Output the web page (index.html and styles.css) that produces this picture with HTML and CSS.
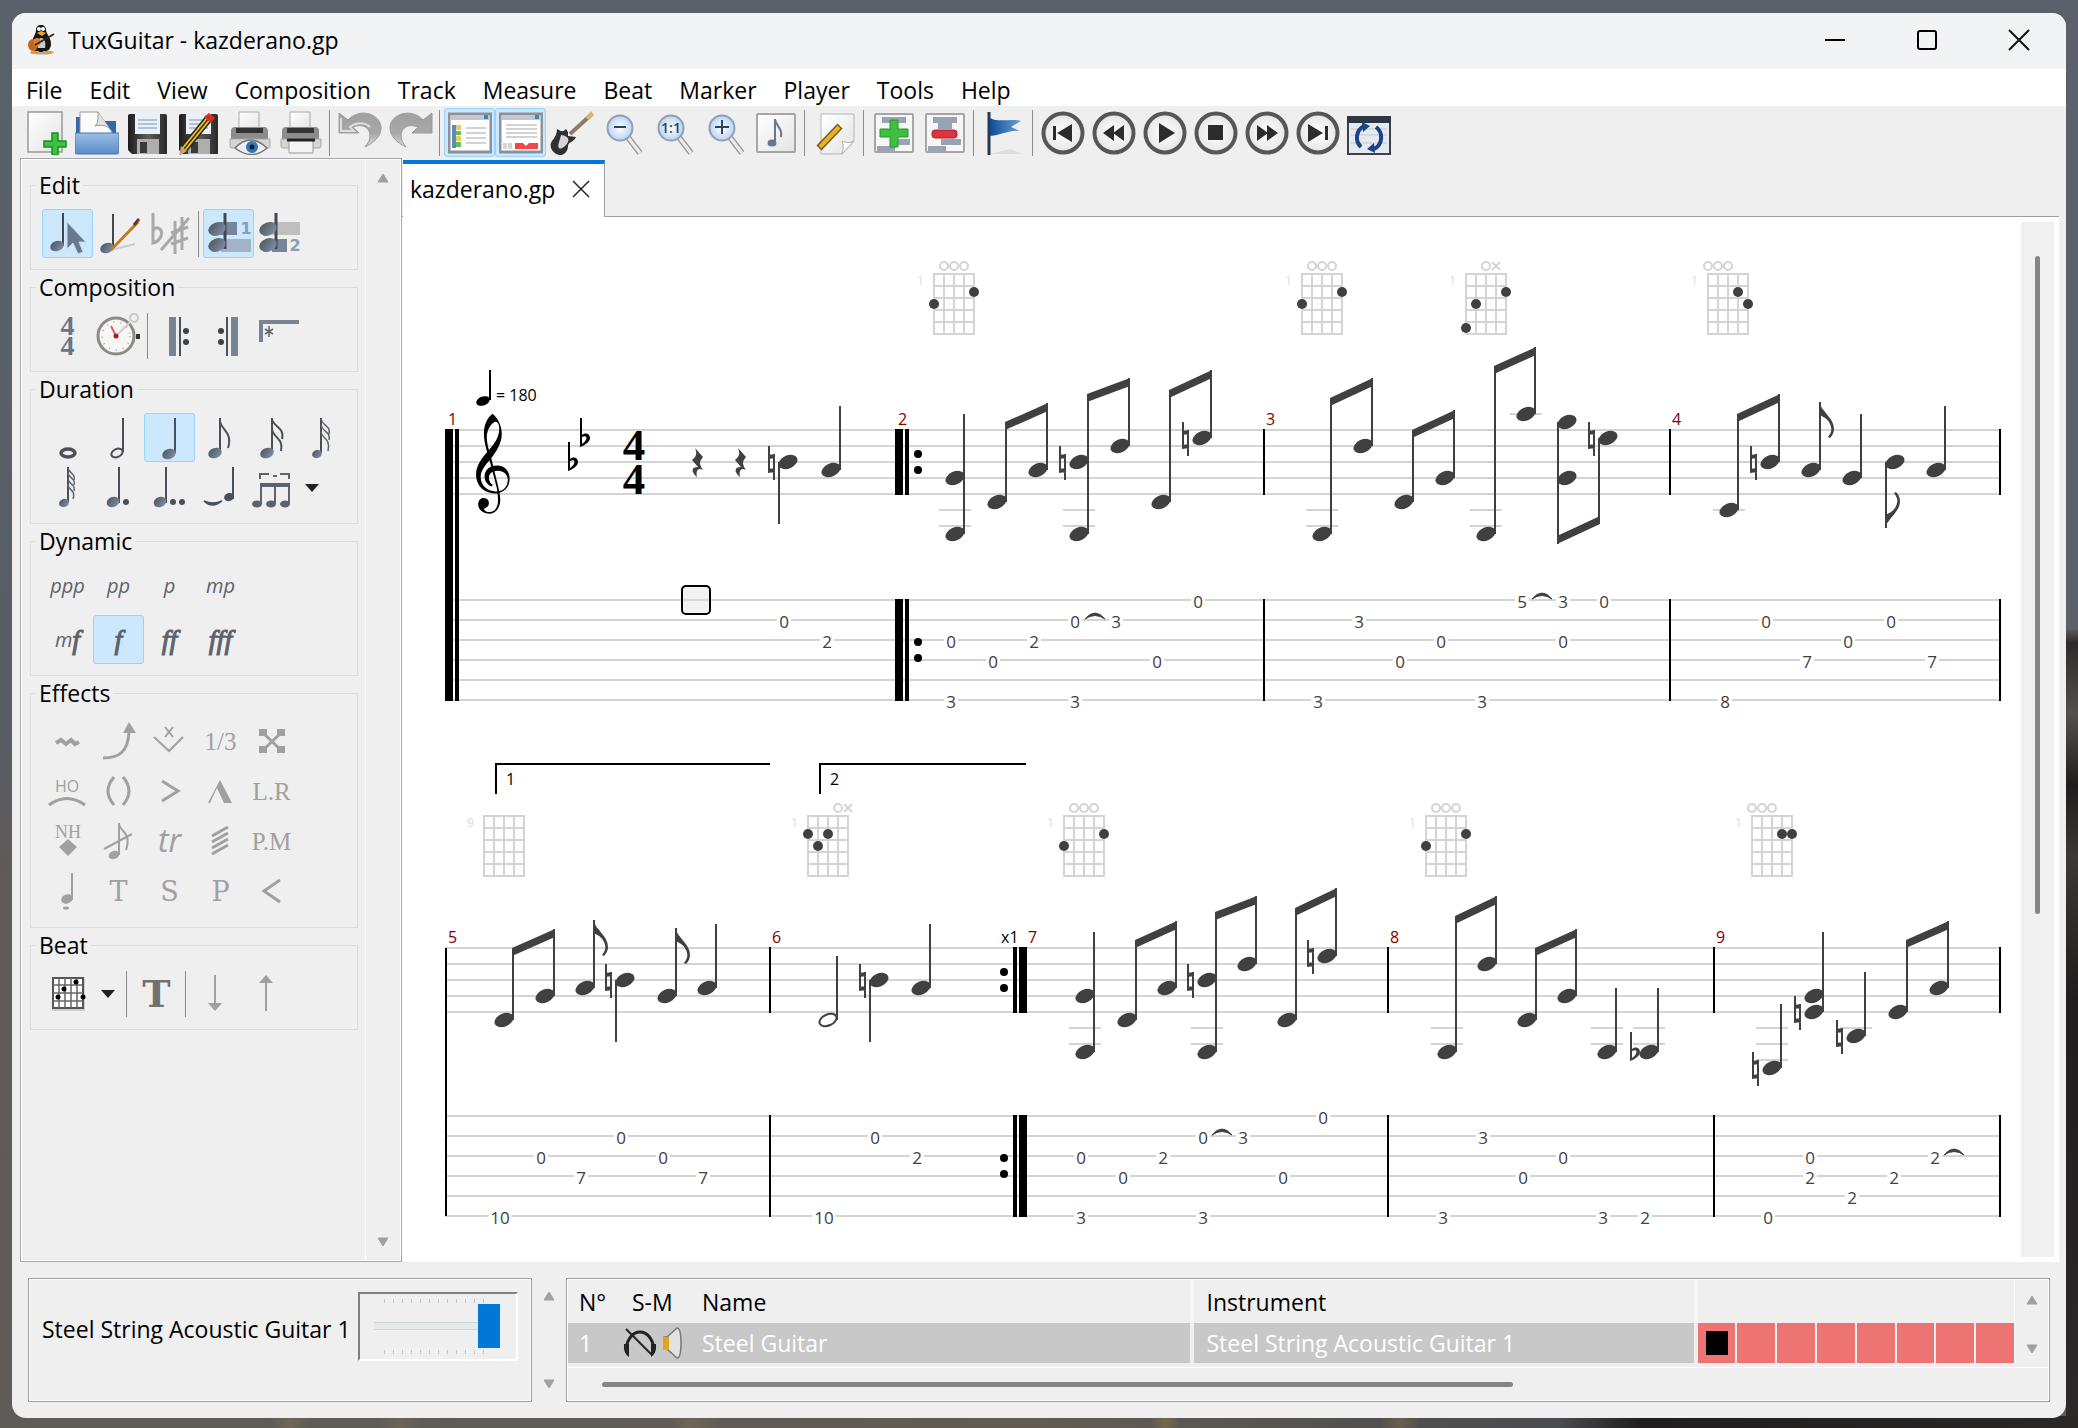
FILE: index.html
```html
<!DOCTYPE html>
<html lang="en">
<head>
<meta charset="utf-8">
<title>TuxGuitar - kazderano.gp</title>
<link rel="stylesheet" href="styles.css">
</head>
<body>
<svg class="defs" aria-hidden="true">
  <defs>
    <linearGradient id="gPaper" x1="0" y1="0" x2="1" y2="1"><stop offset="0" stop-color="#fff"/><stop offset="1" stop-color="#e4e4e4"/></linearGradient>
    <linearGradient id="gBlue" x1="0" y1="0" x2="0" y2="1"><stop offset="0" stop-color="#9bbfe6"/><stop offset="1" stop-color="#5a8cc6"/></linearGradient>
    <linearGradient id="gFlag" x1="0" y1="0" x2="1" y2="0"><stop offset="0" stop-color="#0d4b93"/><stop offset="1" stop-color="#6ba5dc"/></linearGradient>
    <linearGradient id="gDark" x1="0" y1="0" x2="1" y2="0"><stop offset="0" stop-color="#1c1c1c"/><stop offset=".5" stop-color="#5c5c5c"/><stop offset="1" stop-color="#2a2a2a"/></linearGradient>
    <linearGradient id="gUndo" x1="0" y1="0" x2="0" y2="1"><stop offset="0" stop-color="#a0a0a0"/><stop offset=".6" stop-color="#a8a8a8"/><stop offset="1" stop-color="#dcdcdc"/></linearGradient>
    <linearGradient id="gSlate" x1="0" y1="0" x2="1" y2="1"><stop offset="0" stop-color="#4b5158"/><stop offset="1" stop-color="#8494ad"/></linearGradient>
    <radialGradient id="gLens"><stop offset="0" stop-color="#fff"/><stop offset="1" stop-color="#b9d4f3"/></radialGradient>
    <radialGradient id="gBtn"><stop offset="0" stop-color="#fff"/><stop offset="1" stop-color="#e6e6e6"/></radialGradient>
    <g id="glass"><path d="M24 25 37 42" stroke="#9a9a9a" stroke-width="6"/><path d="M24 25 37 42" stroke="#ececec" stroke-width="3"/><circle cx="17" cy="17" r="12.5" fill="url(#gLens)" stroke="#8f9fb5" stroke-width="2"/></g>
    <g id="ring"><circle cx="22" cy="22" r="19.5" fill="url(#gBtn)" stroke="#565656" stroke-width="4"/></g>
    <g id="printer"><path d="M10 1h20v18H10z" fill="url(#gPaper)" stroke="#aaa"/><path d="M2 20q0-4 4-4h29q4 0 4 4v9H2z" fill="#8c8c8c"/><path d="M7 17h27v5H7z" fill="#333"/><path d="M1 28h40v7q0 2-2 2H3q-2 0-2-2z" fill="#d5d5d5" stroke="#a8a8a8"/></g>
    <g id="floppy"><path d="M3 3h35q2 0 2 2v38H5l-4-4V5q0-2 2-2z" fill="url(#gDark)"/><path d="M8 3h25v20H8z" fill="#e9f0f7"/><path d="M11 9h19M11 13h19M11 17h19" stroke="#9ab2cc" stroke-width="1.5"/><path d="M10 28h22v15H10z" fill="#aeaeae"/><path d="M13 31h7v11h-7z" fill="#3a3a3a"/></g>
    <g id="pencil"><path d="M31 7 6 38" stroke="#2a2410" stroke-width="8"/><path d="M31 7 6 38" stroke="#eec02e" stroke-width="5"/><path d="M31 7 6 38" stroke="#3a3010" stroke-width="1.5"/><path d="m26 6 7 6 4-5-6-5z" fill="#d92b2b"/><path d="m3 35 6 5-8 5z" fill="#c9a27a"/></g>
    <g id="voices"><path d="M22 4v36" stroke="#42474e" stroke-width="3"/><ellipse cx="14" cy="20" rx="9" ry="6.5" transform="rotate(-22 14 20)" fill="url(#gSlate)"/><ellipse cx="14" cy="36" rx="9" ry="6.5" transform="rotate(-22 14 36)" fill="url(#gSlate)"/></g>
  </defs>
</svg>

<div class="window">
  <header class="titlebar">
    <svg class="app-icon" viewBox="0 0 28 30"><ellipse cx="14" cy="27.500" rx="12" ry="2" fill="#aaa"/><path d="M13 0c3 0 5 2 5 5 0 4 5 7 5 14 0 5-3 8-10 8S4 24 4 19C4 12 8 10 8 5c0-3 2-5 5-5z" fill="#161616"/><path d="M13 13c4 0 5 5 4 10H10c-2-4 0-10 3-10z" fill="#c9c9c9"/><circle cx="11" cy="4" r="2" fill="#fff"/><circle cx="15" cy="4" r="2" fill="#fff"/><path d="m9 8 4-2 5 2-4 3z" fill="#f2a41c"/><ellipse cx="5" cy="20" rx="5" ry="6" fill="#c6641a"/><ellipse cx="9" cy="17" rx="3.500" ry="4" fill="#db8029"/><path d="m7 20 19-11" stroke="#3a2a1a" stroke-width="2"/><path d="M3 26h8v3H3zM15 26h8v3h-8z" fill="#e79a24"/></svg>
    <h1 class="title">TuxGuitar - kazderano.gp</h1>
    <div class="controls">
      <button class="control" aria-label="Minimize"><svg viewBox="0 0 22 22"><path d="M1 11h20" stroke="#000" stroke-width="2"/></svg></button>
      <button class="control" aria-label="Maximize"><svg viewBox="0 0 22 22"><rect x="2" y="2" width="18" height="18" rx="2" fill="none" stroke="#000" stroke-width="2"/></svg></button>
      <button class="control" aria-label="Close"><svg viewBox="0 0 22 22"><path d="m1 1 20 20M21 1 1 21" stroke="#111" stroke-width="2"/></svg></button>
    </div>
  </header>

  <nav class="menubar">
    <button>File</button><button>Edit</button><button>View</button><button>Composition</button><button>Track</button><button>Measure</button><button>Beat</button><button>Marker</button><button>Player</button><button>Tools</button><button>Help</button>
  </nav>

  <div class="toolbar" role="toolbar" aria-label="Main">
    <button class="tool" aria-label="New"><svg viewBox="0 0 44 44"><path d="M4 1h34v40H4z" fill="url(#gPaper)" stroke="#999" stroke-width="1.500"/><path d="M28 22h6v8h8v6h-8v8h-6v-8h-8v-6h8z" fill="#3fc040" stroke="#1a8f22" stroke-width="1.500"/></svg></button>
    <button class="tool" aria-label="Open"><svg viewBox="0 0 44 44"><path d="M1 6h12l4 4h24v14H1z" fill="#3567a6"/><path d="M5 22V1h18l14 20v3H5z" fill="#fbfbfb" stroke="#999"/><path d="M23 1c0 8 0 12-3 14 8-2 14 0 17 6" fill="#e2e2e2" stroke="#999"/><path d="M0 22h44v19q0 2-2 2H2q-2 0-2-2z" fill="url(#gBlue)" stroke="#4876ad"/></svg></button>
    <button class="tool" aria-label="Save"><svg viewBox="-1 0 44 44"><use href="#floppy"/></svg></button>
    <button class="tool" aria-label="Save As"><svg viewBox="-1 0 44 44"><use href="#floppy"/><use href="#pencil"/></svg></button>
    <button class="tool" aria-label="Print preview"><svg viewBox="-1 0 44 44"><use href="#printer"/><path d="M6 37q15-16 32 0-15 13-32 0z" fill="#eee" stroke="#777" stroke-width="1.500"/><circle cx="23" cy="36" r="6" fill="#2f78bd"/><circle cx="23" cy="36" r="2.500" fill="#0b2338"/></svg></button>
    <button class="tool" aria-label="Print"><svg viewBox="-1 0 44 44"><use href="#printer"/><path d="M9 29h24v13H9z" fill="#f4f4f4" stroke="#999"/><path d="M7 29h28" stroke="#222" stroke-width="3"/></svg></button>
    <span class="sep"></span>
    <button class="tool" aria-label="Undo"><svg viewBox="0 0 44 44"><path d="M1 2v20h20l-6-6c10-4 17 1 17 9 0 4-2 7-5 11 9-4 16-11 16-19C43 3 22-4 10 9z" fill="url(#gUndo)" stroke="#9a9a9a"/><path d="M3 7v13h13l-4-4c6-5 15-5 20 0" fill="none" stroke="#dedede" stroke-width="2"/></svg></button>
    <button class="tool" aria-label="Redo"><svg viewBox="0 0 44 44"><path d="M43 2v20H23l6-6c-10-4-17 1-17 9 0 4 2 7 5 11C8 32 1 25 1 17 1 3 22-4 34 9z" fill="url(#gUndo)" stroke="#9a9a9a"/></svg></button>
    <span class="sep"></span>
    <button class="tool selected" aria-label="Show edit toolbar"><svg viewBox="0 0 44 44"><path d="M1 3h42v38H1z" fill="#fff" stroke="#8b9299" stroke-width="3"/><path d="M3 5h38v4H3z" fill="#c2c8ce"/><path d="M36 4h4v4h-4z" fill="#3d80cc"/><path d="M4 14h4v23H4z" fill="#5a8bc0"/><path d="M8 14h5v5H8zM8 25h5v5H8z" fill="#e9cd5a"/><path d="M8 20h5v4H8zM8 31h5v5H8z" fill="#6db85c"/><path d="M18 17h20M18 22h20M18 27h20M18 32h20" stroke="#c4c4c4" stroke-width="1.500"/></svg></button>
    <button class="tool selected" aria-label="Show track table"><svg viewBox="0 0 44 44"><path d="M1 3h42v38H1z" fill="#fff" stroke="#8b9299" stroke-width="3"/><path d="M3 5h38v4H3z" fill="#c2c8ce"/><path d="M36 4h4v4h-4z" fill="#3d80cc"/><path d="M7 14h31M7 18h31M7 22h31M7 26h31" stroke="#c4c4c4" stroke-width="1.500"/><path d="M4 32h4v6H4zM9 32h4v6H9z" fill="#d4d4d4"/><path d="M16 32h8l3 3 3-3h9v6H16z" fill="#f04848"/></svg></button>
    <button class="tool" aria-label="Instruments"><svg viewBox="0 0 44 44"><path d="M20 23 42 3" stroke="#8f7c66" stroke-width="4"/><path d="m36 6 5-6 3 4-6 5z" fill="#d9b27c"/><path d="M7 18c4 2 5 4 9 0l2 3 0 4 8 1c-2 5-8 5-8 9 0 5-4 10-9 9C1 42-1 34 2 30s5-7 5-12z" fill="#303030"/><path d="M11 24c4 0 9 3 7 7s-7 8-9 6 1-8 2-13z" fill="#d6d6d6"/></svg></button>
    <button class="tool" aria-label="Zoom out"><svg viewBox="-2 0 44 44"><use href="#glass"/><path d="M11 16h12" stroke="#2b4260" stroke-width="2"/></svg></button>
    <button class="tool" aria-label="Zoom 1:1"><svg viewBox="-2 0 44 44"><use href="#glass"/><text class="zoom-text" x="17" y="22">1:1</text></svg></button>
    <button class="tool" aria-label="Zoom in"><svg viewBox="-2 0 44 44"><use href="#glass"/><path d="M10 16h14M17 9v14" stroke="#2b4260" stroke-width="2"/></svg></button>
    <button class="tool" aria-label="Score settings"><svg viewBox="0 0 44 44"><rect x="3" y="3" width="38" height="38" rx="1" fill="url(#gPaper)" stroke="#a6a6a6" stroke-width="2"/><ellipse cx="18" cy="32" rx="4.500" ry="3.500" fill="#66788e"/><path d="M21 32V8c1 8 8 9 6 18" fill="none" stroke="#66788e" stroke-width="2"/></svg></button>
    <span class="sep"></span>
    <button class="tool" aria-label="Edit properties"><svg viewBox="-1 0 44 44"><path d="M7 3h33v27L28 43H7z" fill="url(#gPaper)" stroke="#b5b5b5"/><path d="M28 43c2-6 1-10 0-13 4 2 8 2 12 0z" fill="#fff" stroke="#aaa"/><path d="M26 15 5 37" stroke="#7a5a10" stroke-width="7"/><path d="M25 16 6 36" stroke="#e5b22c" stroke-width="4"/></svg></button>
    <span class="sep"></span>
    <button class="tool" aria-label="Add track"><svg viewBox="0 0 44 44"><rect x="3" y="3" width="38" height="38" rx="1" fill="#f7f7f7" stroke="#a6a6a6" stroke-width="2"/><path d="M10 6h24v6H10zM20 28h18v6H20zM5 35h18v5H5z" fill="#98a4b6"/><path d="M18 9h8v9h10v8H26v10h-8V26H8v-8h10z" fill="#3fbf42" stroke="#27942d"/></svg></button>
    <button class="tool" aria-label="Remove track"><svg viewBox="0 0 44 44"><rect x="3" y="3" width="38" height="38" rx="1" fill="#f7f7f7" stroke="#a6a6a6" stroke-width="2"/><path d="M10 6h24v6H10zM15 12h14v6H15zM18 28h20v6H18zM5 35h18v5H5z" fill="#98a4b6"/><rect x="9" y="19" width="25" height="8" rx="3" fill="#db3340" stroke="#b01e2a"/></svg></button>
    <span class="sep"></span>
    <button class="tool" aria-label="Marker"><svg viewBox="0 0 44 44"><path d="M8 43h32l-12-5z" fill="#dcdcdc"/><path d="M7 1v43" stroke="#2b3b4f" stroke-width="3"/><path d="M8 7c10 5 20 0 31 3l-10 6 9 4c-12-1-17 4-30 5z" fill="url(#gFlag)"/></svg></button>
    <span class="sep"></span>
    <button class="tool" aria-label="First"><svg viewBox="0 0 44 44"><use href="#ring"/><path d="M12 15h3v14h-3zM31 13v18L16 22z" fill="#2c2c2c"/></svg></button>
    <button class="tool" aria-label="Previous"><svg viewBox="0 0 44 44"><use href="#ring"/><path d="M22 14v16l-11-8zM32 14v16l-11-8z" fill="#2c2c2c"/></svg></button>
    <button class="tool" aria-label="Play"><svg viewBox="0 0 44 44"><use href="#ring"/><path d="M16 12v20l16-10z" fill="#2c2c2c"/></svg></button>
    <button class="tool" aria-label="Stop"><svg viewBox="0 0 44 44"><use href="#ring"/><path d="M14 14h15v15H14z" fill="#2c2c2c"/></svg></button>
    <button class="tool" aria-label="Next"><svg viewBox="0 0 44 44"><use href="#ring"/><path d="M12 14v16l11-8zM22 14v16l11-8z" fill="#2c2c2c"/></svg></button>
    <button class="tool" aria-label="Last"><svg viewBox="0 0 44 44"><use href="#ring"/><path d="M29 15h3v14h-3zM12 13v18l15-9z" fill="#2c2c2c"/></svg></button>
    <button class="tool" aria-label="Loop mode"><svg viewBox="0 0 44 44"><path d="M1 6h42v37H1z" fill="#e6e9ee" stroke="#39414f" stroke-width="2"/><path d="M0 5h44v7H0z" fill="#2f3542"/><path d="M4 18h36M4 24h36M4 32h36" stroke="#c3c7cd"/><path d="M14 36a13 13 0 0 1 3-21M29 16a13 13 0 0 1-2 22" fill="none" stroke="#174684" stroke-width="4"/><path d="m15 11 8 4-7 6zM28 42l-8-4 7-6z" fill="#174684"/></svg></button>
  </div>

  <main class="workspace">
    <aside class="sidebar">
      <div class="groups">
        <fieldset>
          <legend>Edit</legend>
          <div class="row">
            <button class="side selected" aria-label="Selection mode"><svg viewBox="0 0 51 49"><path d="M21 4v33" stroke="#42474e" stroke-width="2"/><ellipse cx="15" cy="37" rx="7" ry="5" transform="rotate(-20 15 37)" fill="url(#gSlate)"/><path d="M25 13v27l6-6 5 11 5-2-4-10h7z" fill="#6a788c" stroke="#c9d7e8"/></svg></button>
            <button class="side" aria-label="Edition mode"><svg viewBox="0 0 51 49"><path d="m22 40 20-5" stroke="#ccc" stroke-width="2"/><path d="M20 5v33" stroke="#42474e" stroke-width="2"/><ellipse cx="14" cy="39" rx="7" ry="5" transform="rotate(-20 14 39)" fill="url(#gSlate)"/><path d="M45 13 18 41" stroke="#c07a28" stroke-width="3"/><path d="m41 16 5-6" stroke="#6a3430" stroke-width="3"/></svg></button>
            <button class="side" aria-label="Not natural key"><svg viewBox="0 0 51 49" fill="none" stroke="#a9a9a9" stroke-width="3"><path d="M9 4v30c8-2 12-12 5-15-2-1-4 1-5 3M31 12v33M38 8v33M27 24l17-6M27 35l17-6M17 41 45 9"/></svg></button>
            <span class="sep"></span>
            <button class="side selected" aria-label="Voice 1"><svg viewBox="0 0 51 49"><path d="M16 13h18v13H16z" fill="#76859b"/><path d="M18 30h30v13H18z" fill="#a1b3c6"/><use href="#voices"/><text class="voice" x="43" y="25">1</text></svg></button>
            <button class="side" aria-label="Voice 2"><svg viewBox="0 0 51 49"><path d="M16 13h30v13H16z" fill="#bfbfbf"/><path d="M18 30h15v13H18z" fill="#76859b"/><use href="#voices"/><text class="voice" x="41" y="42">2</text></svg></button>
          </div>
        </fieldset>
        <fieldset>
          <legend>Composition</legend>
          <div class="row">
            <button class="side" aria-label="Time signature"><span class="time">4</span><span class="time">4</span></button>
            <button class="side" aria-label="Tempo"><svg viewBox="0 0 51 49"><circle cx="41" cy="7" r="4" fill="none" stroke="#c9c9c9" stroke-width="2"/><circle cx="23" cy="25" r="18" fill="#f8f5f5" stroke="#8b8b86" stroke-width="3"/><circle cx="23" cy="25" r="14" fill="none" stroke="#b8b0b0" stroke-width="2" stroke-dasharray="1 6"/><path d="M23 25 37 11" stroke="#ccc" stroke-width="2"/><path d="m23 25-5-10" stroke="#c66" stroke-width="2"/><circle cx="23" cy="25" r="2.500" fill="#b01c1c"/><path d="M43 23h4v5h-4z" fill="#333"/></svg></button>
            <span class="sep"></span>
            <button class="side" aria-label="Open repeat"><svg viewBox="0 0 51 49"><path d="M17 6h7v39h-7z" fill="#788494"/><path d="M28 6v39" stroke="#4b5158" stroke-width="2"/><circle cx="34" cy="20" r="3" fill="#3c4147"/><circle cx="34" cy="31" r="3" fill="#3c4147"/></svg></button>
            <button class="side" aria-label="Close repeat"><svg viewBox="0 0 51 49"><path d="M28 6h7v39h-7z" fill="#788494"/><path d="M24 6v39" stroke="#4b5158" stroke-width="2"/><circle cx="18" cy="20" r="3" fill="#3c4147"/><circle cx="18" cy="31" r="3" fill="#3c4147"/></svg></button>
            <button class="side" aria-label="Alternative repeat"><svg viewBox="0 0 51 49"><path d="M7 31V11h38" fill="none" stroke="#788494" stroke-width="4"/><path d="M15 15v11m-4-8 8 5m0-5-8 5" stroke="#666" stroke-width="1.500"/></svg></button>
          </div>
        </fieldset>
        <fieldset>
          <legend>Duration</legend>
          <div class="row">
            <button class="side" aria-label="Whole"><svg viewBox="0 0 51 49"><ellipse cx="26" cy="40" rx="7" ry="4" fill="none" stroke="#4a5058" stroke-width="3.500"/></svg></button>
            <button class="side" aria-label="Half"><svg viewBox="0 0 51 49"><path d="M30 5v34" stroke="#4a5058" stroke-width="2"/><ellipse cx="24" cy="40" rx="6" ry="4" transform="rotate(-25 24 40)" fill="none" stroke="#4a5058" stroke-width="2"/></svg></button>
            <button class="side selected" aria-label="Quarter"><svg viewBox="0 0 51 49"><path d="M31 5v35" stroke="#4a5058" stroke-width="2"/><ellipse cx="25" cy="41" rx="7" ry="5" transform="rotate(-20 25 41)" fill="url(#gSlate)"/></svg></button>
            <button class="side" aria-label="Eighth"><svg viewBox="0 0 51 49"><path d="M25 5v35" stroke="#4a5058" stroke-width="2"/><path d="M25 8c1 9 13 11 8 27" fill="none" stroke="#4a5058" stroke-width="2"/><ellipse cx="20" cy="40" rx="7" ry="5" transform="rotate(-20 20 40)" fill="url(#gSlate)"/></svg></button>
            <button class="side" aria-label="Sixteenth"><svg viewBox="0 0 51 49"><path d="M26 5v35" stroke="#4a5058" stroke-width="2"/><path d="M26 6c1 8 13 8 10 20M26 16c1 9 12 9 9 22" fill="none" stroke="#4a5058" stroke-width="2"/><ellipse cx="21" cy="40" rx="7" ry="5" transform="rotate(-20 21 40)" fill="url(#gSlate)"/></svg></button>
            <button class="side" aria-label="Thirty-second"><svg viewBox="0 0 51 49"><path d="M24 5v35" stroke="#4a5058" stroke-width="2"/><path d="M24 6c1 7 10 6 8 15M24 12c1 7 10 6 8 15M24 19c1 7 10 6 7 19" fill="none" stroke="#5d636b" stroke-width="1.500"/><ellipse cx="20" cy="41" rx="5" ry="4" transform="rotate(-20 20 41)" fill="url(#gSlate)"/></svg></button>
          </div>
          <div class="row">
            <button class="side" aria-label="Sixty-fourth"><svg viewBox="0 0 51 49"><path d="M26 4v36" stroke="#4a5058" stroke-width="2"/><path d="M26 5c1 6 8 5 6 12M26 10c1 6 8 5 6 12M26 16c1 6 8 5 6 12M26 22c1 6 8 5 5 14" fill="none" stroke="#5d636b" stroke-width="1.500"/><ellipse cx="22" cy="40" rx="5" ry="4" transform="rotate(-20 22 40)" fill="url(#gSlate)"/></svg></button>
            <button class="side" aria-label="Dotted"><svg viewBox="0 0 51 49"><path d="M26 4v36" stroke="#4a5058" stroke-width="2"/><ellipse cx="20" cy="39" rx="6.500" ry="5" transform="rotate(-20 20 39)" fill="url(#gSlate)"/><circle cx="33" cy="39" r="3" fill="#4a5058"/></svg></button>
            <button class="side" aria-label="Double dotted"><svg viewBox="0 0 51 49"><path d="M22 4v36" stroke="#4a5058" stroke-width="2"/><ellipse cx="16" cy="39" rx="6.500" ry="5" transform="rotate(-20 16 39)" fill="url(#gSlate)"/><circle cx="29" cy="39" r="3" fill="#4a5058"/><circle cx="38" cy="39" r="3" fill="#4a5058"/></svg></button>
            <button class="side" aria-label="Tied"><svg viewBox="0 0 51 49"><path d="M38 4v32" stroke="#4a5058" stroke-width="2"/><ellipse cx="34" cy="34" rx="5" ry="4" transform="rotate(-20 34 34)" fill="#4a5058"/><path d="M9 38q8 8 18 0-9 4-18 0z" fill="#4a5058" stroke="#4a5058" stroke-width="1.500"/></svg></button>
            <button class="side" aria-label="Tuplet"><svg viewBox="0 0 51 49"><path d="M14 16v-5h9M34 11h9v5M27 13h4" fill="none" stroke="#5d636b" stroke-width="2"/><path d="M14 22h30" stroke="#5d636b" stroke-width="4"/><path d="M15 22v19M29 22v19M43 22v19" stroke="#5d636b" stroke-width="2"/><ellipse cx="11" cy="41" rx="5" ry="3.500" fill="#5d636b"/><ellipse cx="25" cy="41" rx="5" ry="3.500" fill="#5d636b"/><ellipse cx="39" cy="41" rx="5" ry="3.500" fill="#5d636b"/></svg></button>
            <button class="drop" aria-label="Tuplet options"><svg viewBox="0 0 14 8"><path d="M0 0h14L7 8z" fill="#222"/></svg></button>
          </div>
        </fieldset>
        <fieldset>
          <legend>Dynamic</legend>
          <div class="row">
            <button class="side dyn piano">ppp</button><button class="side dyn piano">pp</button><button class="side dyn piano">p</button><button class="side dyn piano">mp</button>
          </div>
          <div class="row">
            <button class="side dyn">m<span class="forte">f</span></button><button class="side forte selected">f</button><button class="side forte">ff</button><button class="side forte">fff</button>
          </div>
        </fieldset>
        <fieldset>
          <legend>Effects</legend>
          <div class="row">
            <button class="side" aria-label="Vibrato"><svg viewBox="0 0 51 49"><path d="m14 26 5-3 5 4 5-4 4 4 4-2" fill="none" stroke="#a0a0a0" stroke-width="4"/></svg></button>
            <button class="side" aria-label="Bend"><svg viewBox="0 0 51 49"><path d="M10 41c16 0 25-6 26-26" fill="none" stroke="#a0a0a0" stroke-width="3"/><path d="m36 5 7 11H30z" fill="#a0a0a0"/></svg></button>
            <button class="side" aria-label="Tremolo bar"><svg viewBox="0 0 51 49"><path d="m10 20 15 14 14-14M21 10l8 10M29 10l-8 10" fill="none" stroke="#a0a0a0" stroke-width="2"/></svg></button>
            <button class="side fx">1/3</button>
            <button class="side" aria-label="Dead note"><svg viewBox="0 0 51 49"><path d="m16 15 20 19M36 15 16 34" stroke="#a0a0a0" stroke-width="3"/><path d="M13 12h8v7h-8zM31 12h8v7h-8zM13 29h8v7h-8zM31 29h8v7h-8z" fill="#a0a0a0"/></svg></button>
          </div>
          <div class="row">
            <button class="side" aria-label="Hammer-on"><svg viewBox="0 0 51 49"><text class="ho" x="25" y="25">HO</text><path d="M7 38q18-13 36 0" fill="none" stroke="#a0a0a0" stroke-width="3"/></svg></button>
            <button class="side" aria-label="Ghost note"><svg viewBox="0 0 51 49"><path d="M21 10q-12 14 0 28M30 10q12 14 0 28" fill="none" stroke="#a0a0a0" stroke-width="3"/></svg></button>
            <button class="side" aria-label="Accent"><svg viewBox="0 0 51 49"><path d="m18 14 16 10-16 10" fill="none" stroke="#a0a0a0" stroke-width="3"/></svg></button>
            <button class="side" aria-label="Heavy accent"><svg viewBox="0 0 51 49"><path d="m13 36 12-23 12 23h-8l-7-15-7 15z" fill="#a0a0a0"/></svg></button>
            <button class="side fx">L.R</button>
          </div>
          <div class="row">
            <button class="side" aria-label="Harmonic"><svg viewBox="0 0 51 49"><text class="nh" x="26" y="21">NH</text><path d="m26 22 9 8-9 9-9-9z" fill="#a0a0a0"/></svg></button>
            <button class="side" aria-label="Grace note"><svg viewBox="0 0 51 49"><path d="M26 6v32M26 7c1 8 13 8 7 26M11 32l28-15" fill="none" stroke="#a0a0a0" stroke-width="2"/><ellipse cx="21" cy="38" rx="5.500" ry="4" transform="rotate(-20 21 38)" fill="#a0a0a0"/></svg></button>
            <button class="side trill">tr</button>
            <button class="side" aria-label="Tremolo picking"><svg viewBox="0 0 51 49"><path d="m17 19 16-9M17 25l16-9M17 31l16-9M17 37l16-9" stroke="#a0a0a0" stroke-width="3"/></svg></button>
            <button class="side fx">P.M</button>
          </div>
          <div class="row">
            <button class="side" aria-label="Staccato"><svg viewBox="0 0 51 49"><path d="M30 6v27" stroke="#a0a0a0" stroke-width="2"/><ellipse cx="25" cy="32" rx="6" ry="4.500" transform="rotate(-20 25 32)" fill="#a0a0a0"/><ellipse cx="24" cy="41" rx="3" ry="1.500" fill="#a0a0a0"/></svg></button>
            <button class="side slab">T</button><button class="side slab">S</button><button class="side slab">P</button>
            <button class="side" aria-label="Fade in"><svg viewBox="0 0 51 49"><path d="M34 13 18 24l16 11" fill="none" stroke="#a0a0a0" stroke-width="3"/></svg></button>
          </div>
        </fieldset>
        <fieldset>
          <legend>Beat</legend>
          <div class="row">
            <button class="side" aria-label="Chord"><svg viewBox="0 0 51 49"><path d="M10 8h33v34H10z" fill="#cfcfcf"/><path d="M11 9h30v30H11z" fill="#fff" stroke="#555" stroke-width="2"/><path d="M17 9v30M23 9v30M29 9v30M35 9v30M11 16h30M11 24h30M11 32h30" stroke="#666" stroke-width="1.500"/><circle cx="34" cy="13" r="2.500"/><circle cx="22" cy="20" r="2.500"/><circle cx="16" cy="28" r="2.500"/><circle cx="41" cy="28" r="2.500"/></svg></button>
            <button class="drop" aria-label="Chord options"><svg viewBox="0 0 14 8"><path d="M0 0h14L7 8z" fill="#222"/></svg></button>
            <span class="sep"></span>
            <button class="side big-t">T</button>
            <span class="sep"></span>
            <button class="side" aria-label="Stroke down"><svg viewBox="0 0 51 49"><path d="M25 6v30" stroke="#a0a0a0" stroke-width="2"/><path d="M18 34h14l-7 8z" fill="#a0a0a0"/></svg></button>
            <button class="side" aria-label="Stroke up"><svg viewBox="0 0 51 49"><path d="M25 12v30" stroke="#a0a0a0" stroke-width="2"/><path d="M18 14h14l-7-8z" fill="#a0a0a0"/></svg></button>
          </div>
        </fieldset>
      </div>
      <div class="arrows">
        <button class="arrow" aria-label="Scroll up"><svg viewBox="0 0 12 10"><path d="M6 1 11 9H1z" fill="#a0a0a0" stroke="#a0a0a0" stroke-linejoin="round"/></svg></button>
        <button class="arrow" aria-label="Scroll down"><svg viewBox="0 0 12 10"><path d="M6 9 11 1H1z" fill="#a0a0a0" stroke="#a0a0a0" stroke-linejoin="round"/></svg></button>
      </div>
    </aside>

    <section class="document">
      <div class="tabs">
        <div class="tab"><span>kazderano.gp</span><button class="tab-close" aria-label="Close tab"><svg viewBox="0 0 18 18"><path d="m1 1 16 16M17 1 1 17" stroke="#222" stroke-width="1.500"/></svg></button></div>
      </div>
      <div class="sheet">
        <div class="page"><svg id="score" viewBox="403 218 1618 1034" role="img" aria-label="Score and tablature, measures 1 to 9"></svg></div>
        <div class="vscroll"><div class="vthumb"></div></div>
      </div>
    </section>
  </main>

  <footer class="bottom">
    <section class="channel">
      <label for="volume">Steel String Acoustic Guitar 1</label>
      <div class="slider"><div class="ticks"></div><input id="volume" type="range" min="0" max="127" value="127"><div class="ticks"></div></div>
    </section>
    <div class="arrows mid">
      <button class="arrow" aria-label="Previous channel"><svg viewBox="0 0 12 10"><path d="M6 1 11 9H1z" fill="#a0a0a0" stroke="#a0a0a0" stroke-linejoin="round"/></svg></button>
      <button class="arrow" aria-label="Next channel"><svg viewBox="0 0 12 10"><path d="M6 9 11 1H1z" fill="#a0a0a0" stroke="#a0a0a0" stroke-linejoin="round"/></svg></button>
    </div>
    <section class="tracks">
      <div class="track-view">
        <table>
          <colgroup><col class="c-num"><col class="c-sm"><col class="c-name"><col class="c-inst"><col class="c-meas"></colgroup>
          <thead><tr><th class="num">N°</th><th>S-M</th><th>Name</th><th class="split">Instrument</th><th class="split"></th></tr></thead>
          <tbody><tr>
            <td class="num">1</td>
            <td class="sm"><svg viewBox="0 0 62 34"><path d="M4 24C6 0 30 0 32 24" fill="none" stroke="#222" stroke-width="3"/><path d="M2 18h5v13q-6-4-5-13zM34 18h-5v13q6-4 5-13z" fill="#222"/><path d="m4 3 26 26" stroke="#222" stroke-width="2"/><path d="m45 11 10-9q4 0 4 15t-4 15l-10-9h-3V11z" fill="#e2e2e2" stroke="#777" stroke-width="1.500"/><path d="M41 11h6v13h-6z" fill="#dfa520"/></svg></td>
            <td>Steel Guitar</td>
            <td class="split">Steel String Acoustic Guitar 1</td>
            <td class="split measures"><div class="cells"><span class="now"></span><span></span><span></span><span></span><span></span><span></span><span></span><span></span></div></td>
          </tr></tbody>
        </table>
        <div class="arrows side-arrows">
          <button class="arrow" aria-label="Previous track"><svg viewBox="0 0 12 10"><path d="M6 1 11 9H1z" fill="#a0a0a0" stroke="#a0a0a0" stroke-linejoin="round"/></svg></button>
          <button class="arrow" aria-label="Next track"><svg viewBox="0 0 12 10"><path d="M6 9 11 1H1z" fill="#a0a0a0" stroke="#a0a0a0" stroke-linejoin="round"/></svg></button>
        </div>
      </div>
      <div class="hscroll"><div class="hthumb"></div></div>
    </section>
  </footer>
</div>
<script src="score.js"></script>
</body>
</html>
```
FILE: styles.css
```css
* { box-sizing: border-box; }
body {
  margin: 0;
  min-height: 100vh;
  padding: 13px 12px 10px;
  display: flex;
  font: 23px/30px "Open Sans", "Noto Sans", sans-serif;
  color: #000;
  background:
    linear-gradient(90deg, transparent 0 270px, #86765466 290px, transparent 310px 380px, #86765455 400px, transparent 420px 670px, #86765466 690px, transparent 720px 1150px, #8a754c88 1165px, transparent 1180px 1380px, #8a754c66 1400px, transparent 1420px) bottom / 100% 10px no-repeat,
    linear-gradient(90deg, #5f5b57 0 20%, #625c52 50%, #4a4b4e 75%, #201e1e 79%, #2a2727 100%) bottom / 100% 12px no-repeat,
    linear-gradient(#5b616b 0 42%, #5f5f66 44%, #2f2b2a 45%, #55504c 50%, #1f1d1d 55%, #3c3836 60%, #1f1d1d 70%, #2b2929) right / 12px 100% no-repeat,
    linear-gradient(#5b616b, #585d66 50%, #605a58 62%, #5f5b57);
}
button { font: inherit; color: inherit; border: 0; background: none; padding: 0; }
svg { display: block; }
.defs { position: absolute; width: 0; height: 0; }

.window { flex: 1; display: flex; flex-direction: column; background: #efefef; border-radius: 14px; overflow: hidden; min-width: 0; }
.titlebar { height: 56px; flex: none; display: flex; align-items: center; background: #f1f3f5; padding: 0 1px 2px 16px; }
.app-icon { width: 28px; height: 30px; }
.title { margin: 0 0 0 12px; font-size: 23px; font-weight: 400; flex: 1; }
.controls { display: flex; align-self: stretch; }
.control { width: 92px; display: grid; place-items: center; }
.control svg { width: 22px; height: 22px; }

.menubar { height: 37px; flex: none; display: flex; background: #fff; padding: 4px 0 0; align-items: center; }
.menubar button { padding: 0 13px 0 14px; }
.toolbar { height: 52px; flex: none; display: flex; padding: 2px 8px 0; align-items: flex-start; }
.tool { width: 51px; height: 49px; display: grid; place-content: center; border: 1px solid transparent; border-radius: 2px; }
.tool svg { width: 44px; height: 44px; }
.selected { background: #cce8ff; border: 1px solid #99d1ff; border-radius: 3px; }
.sep { width: 8px; height: 46px; align-self: center; background: linear-gradient(#8a8a8a, #8a8a8a) 3px 0 / 1px 100% no-repeat; }
.zoom-text { font: 600 14px "Open Sans", sans-serif; fill: #2b4260; text-anchor: middle; }

.workspace { flex: 1; display: flex; padding: 0 7px 0 8px; min-height: 0; }
.sidebar { width: 382px; flex: none; border: 1px solid #a5a7ae; box-shadow: inset 0 0 0 1px #fff; padding: 1px; display: flex; }
.groups { flex: 1; padding: 10px 7px 0 8px; display: flex; flex-direction: column; gap: 2px; border-right: 1px solid #fff; }
fieldset { margin: 0; border: 1px solid #dcdcdc; padding: 9px 0 11px 11px; min-width: 0; display: flex; flex-direction: column; gap: 1px; }
legend { line-height: 30px; padding: 0 3px; margin-left: -6px; }
.row { display: flex; }
.side { width: 51px; height: 49px; display: grid; place-content: center; border: 1px solid transparent; flex: none; }
.side.selected { border-color: #99d1ff; }
.side svg { width: 51px; height: 49px; }
.row .time { font: 700 28px/20px "Liberation Serif", serif; color: #697484; }
.voice { font: 700 16px "DejaVu Sans", sans-serif; fill: #8c9bb8; text-anchor: middle; }
.drop { width: 30px; height: 49px; display: grid; place-items: center; }
.drop svg { width: 14px; height: 8px; }
.dyn { font: italic 20px/28px "Open Sans", sans-serif; color: #5c636c; display: flex; justify-content: center; align-items: center; }
.piano { padding-bottom: 8px; }
.forte { font: italic 28px/28px "Liberation Serif", serif; color: #5c636c; -webkit-text-stroke: 1px #5c636c; }
.fx { font: 25px/30px "Liberation Serif", serif; color: #a0a0a0; }
.ho { font: 16px "Open Sans", sans-serif; fill: #a0a0a0; text-anchor: middle; }
.nh { font: 18px "Liberation Serif", serif; fill: #a0a0a0; text-anchor: middle; }
.trill { font: italic 32px/32px "Open Sans", sans-serif; color: #a0a0a0; padding-bottom: 4px; }
.slab { font: 27px/30px "DejaVu Serif", serif; color: #a0a0a0; }
.big-t { font: 700 38px/38px "DejaVu Serif", serif; color: #707070; }

.arrows { width: 34px; flex: none; display: flex; flex-direction: column; justify-content: space-between; align-items: center; padding: 13px 0; }
.arrow { width: 12px; height: 10px; }
.arrow svg { width: 12px; height: 10px; }

.document { flex: 1; min-width: 0; display: flex; flex-direction: column; }
.tabs { height: 59px; flex: none; border-bottom: 1px solid #a0a0a0; display: flex; }
.tab { height: 57px; border-top: 4px solid #0078d7; border-right: 1px solid #a0a0a0; background: #fff; margin: 2px 0 -1px 1px; width: 202px; padding: 0 14px 4px 7px; display: flex; align-items: center; justify-content: space-between; }
.tab-close, .tab-close svg { width: 18px; height: 18px; }
.sheet { flex: 1; min-height: 0; background: #fff; display: flex; padding: 5px 5px 5px 0; }
.page { flex: 1; min-width: 0; overflow: hidden; margin-top: -4px; padding-left: 1px; }
.page svg { width: 100%; }
.vscroll { width: 33px; flex: none; background: #f0f0f0; padding: 34px 14px; }
.vthumb { height: 68%; width: 5px; border-radius: 3px; background: #858585; }

.bottom { flex: none; display: flex; padding: 16px 16px 16px; height: 156px; }
.channel { width: 504px; flex: none; border: 1px solid #a0a0a0; box-shadow: inset 0 0 0 1px #fff; padding: 13px 13px 0; display: flex; justify-content: space-between; align-items: flex-start; }
.channel label { line-height: 74px; }
.slider { width: 160px; height: 69px; border: 2px solid; border-color: #808080 #fff #fff #808080; padding: 5px 14px; }
.ticks { height: 4px; margin: 0 10px; background: repeating-linear-gradient(90deg, #c4c4c4 0 1px, transparent 1px 9px); }
.slider input { appearance: none; display: block; width: 126px; height: 46px; margin: 0 0 1px; background: linear-gradient(#d6d6d6 0 1px, #e7eaea 1px 7px, #d6d6d6 7px) 0 19px / 100% 8px no-repeat; }
.slider input::-webkit-slider-thumb { appearance: none; width: 22px; height: 44px; background: #0078d7; }
.mid { padding: 13px 0; }
.tracks { flex: 1; min-width: 0; border: 1px solid #a0a0a0; box-shadow: inset 0 0 0 1px #fff; padding: 1px; }
.track-view { display: flex; border-bottom: 1px solid #fff; height: 88px; }
table { flex: 1; table-layout: fixed; width: 100%; border-collapse: collapse; border-right: 1px solid #fff; align-self: flex-start; }
th, td { text-align: left; font-weight: 400; padding: 0 0 0 13px; white-space: nowrap; }
th { height: 43px; padding-bottom: 0; }
td { height: 40px; background: #c8c8c8; color: #fff; }
th.num, td.num { padding-left: 11px; }
.c-num { width: 51px; }
.c-sm { width: 70px; }
.c-name { width: auto; }
.c-inst { width: 504px; }
.c-meas { width: 319px; }
.split { border-left: 4px solid #f6f6f6; }
td.split { border-left-color: #efefef; }
td.sm { padding: 0 0 0 3px; }
.sm svg { width: 62px; height: 34px; }
td.measures { padding: 0; background: #efefef; }
.cells { display: grid; grid-template-columns: repeat(8, 1fr); gap: 2px; height: 40px; }
.cells span { background: #ee7474; }
.cells .now { display: grid; align-items: center; padding-left: 8px; }
.now::before { content: ""; width: 22px; height: 24px; background: #000; }
.side-arrows { width: 33px; padding: 15px 0 13px; }
.hscroll { padding: 14px 0 0 34px; }
.hthumb { width: 63%; height: 5px; border-radius: 3px; background: #858585; }

#score .label { font: 16px "Open Sans", "Noto Sans", sans-serif; }
#score .number { fill: #800000; }
#score .fret { font: 17px "Open Sans", "Noto Sans", sans-serif; fill: #404040; text-anchor: middle; }
#score .chord-fret { font: 12px "Open Sans", "Noto Sans", sans-serif; fill: #dcdcdc; }
#score .meter { font: 700 45px "Liberation Serif", serif; text-anchor: middle; }
```
FILE: score.js
```js
const NS = 'http://www.w3.org/2000/svg';
const score = document.getElementById('score');
const INK = '#404040';
const LINE = '#d4d4d4';

function add(name, attrs, text) {
  const node = document.createElementNS(NS, name);
  for (const key in attrs) node.setAttribute(key, attrs[key]);
  if (text !== undefined) node.textContent = text;
  score.appendChild(node);
  return node;
}
const path = (d, fill, extra) => add('path', { d, fill, ...extra });
const rect = (x, y, width, height, fill) => add('rect', { x, y, width, height, fill });
const label = (x, y, text, cls) => add('text', { x, y, class: cls }, text);

function staff(top, tab, left, right) {
  for (let i = 0; i < 5; i++) rect(left, top + 16 * i - 1, right - left, 2, LINE);
  for (let i = 0; i < 6; i++) rect(left, tab + 20 * i - 1, right - left, 2, LINE);
}
function bar(x, width, top, tab) {
  rect(x, top - 1, width, 66, '#000');
  rect(x, tab - 1, width, 102, '#000');
}
function repeatDots(x, top, tab) {
  for (const y of [top + 24, top + 40, tab + 42, tab + 58]) add('circle', { cx: x, cy: y, r: 4, fill: '#000' });
}
function chord(x, y, fret, open, muted, dots) {
  for (let i = 0; i < 5; i++) rect(x + 10 * i - 1, y - 1, 2, 62, LINE);
  for (let i = 0; i < 6; i++) rect(x - 1, y + 12 * i - 1, 42, 2, LINE);
  for (const s of open) add('circle', { cx: x + 10 * s, cy: y - 8, r: 4, fill: 'none', stroke: LINE, 'stroke-width': 2 });
  for (const s of muted) path(`M${x + 10 * s - 4} ${y - 12}l8 8m0-8l-8 8`, 'none', { stroke: LINE, 'stroke-width': 2 });
  for (const [s, f] of dots) add('circle', { cx: x + 10 * s, cy: y + 6 + 12 * (f - 1), r: 5, fill: INK });
  label(x - 17, y + 11, fret, 'chord-fret');
}
function head(x, y, hollow) {
  add('ellipse', {
    cx: x, cy: y, rx: hollow ? 9 : 10, ry: hollow ? 5.5 : 6.5, transform: `rotate(-24 ${x} ${y})`,
    fill: hollow ? '#fff' : INK, stroke: hollow ? INK : 'none', 'stroke-width': 2
  });
}
function natural(x, y) {
  path(`M0 0h2v26h-2zM5 8h2v26h-2zM0 9l7-1v4l-7 1zM0 23l7-1v4l-7 1z`, INK, { transform: `translate(${x - 20} ${y - 16})` });
}
function flat(x, y, ink) {
  path('M0 0h2v17c4-3 8-1 8 3 0 3-4 7-10 9zM2 19v7c6-4 6-10 0-7z', ink, { transform: `translate(${x} ${y})`, 'fill-rule': 'evenodd' });
}
function rest(x, y) {
  path('M3 0L11 9C7 14 7 16 11 22C5 19 4 24 5 29C-1 24-1 19 6 19L0 12C5 8 5 5 3 0Z', INK, { transform: `translate(${x} ${y})` });
}
function slur(x, y) {
  path(`M${x} ${y}q10-12 20 0q-10-7-20 0z`, INK, { stroke: INK });
}

/* beat: x of the head, [head y, accidental], stem end, tab notes [string, fret], options */
function beats(list, top, tab) {
  list.forEach(([x, heads, stem, notes, opt = ''], i) => {
    const down = opt.includes('d');
    const sx = down ? x - 9 : x + 9;
    for (const [y] of heads) {
      for (let l = top + 80; l <= y; l += 16) rect(x - 16, l - 1, 32, 2, LINE);
      for (let l = top - 16; l >= y; l -= 16) rect(x - 16, l - 1, 32, 2, LINE);
    }
    const ys = heads.map(h => h[0]).concat(stem);
    const y0 = Math.min(...ys), y1 = Math.max(...ys);
    rect(sx - 1, y0, 2, y1 - y0, INK);
    for (const [y, acc] of heads) {
      head(x, y, opt.includes('h'));
      if (acc === 'n') natural(x, y);
      if (acc === 'b') flat(x - 19, y - 20, INK);
    }
    if (opt.includes('f')) {
      path('M-1 0C2 10 14 16 14 27C14 31 12 34 10 36L8 35C11 31 12 28 11 25C10 19 5 15-1 13Z', INK,
        { transform: `translate(${sx} ${stem}) scale(1 ${down ? -1 : 1})` });
    }
    if (opt.includes('b')) {
      const nx = list[i + 1][0] + (down ? -9 : 9), ny = list[i + 1][2], t = down ? -8 : 8;
      path(`M${sx - 1} ${stem}L${nx + 1} ${ny}v${t}L${sx - 1} ${stem + t}z`, INK);
    }
    for (const [s, f] of notes) {
      const y = tab + 20 * (s - 1), w = String(f).length * 9 + 5;
      rect(x - 4 - w / 2, y - 2, w, 4, '#fff');
      label(x - 4, y + 8, f, 'fret');
    }
  });
}

/* first system */
staff(430, 600, 445, 2000);
rect(445, 429, 8, 272, '#000');
rect(455, 429, 4, 272, '#000');
bar(895, 8, 430, 600);
bar(905, 4, 430, 600);
repeatDots(918, 430, 600);
for (const x of [1263, 1669, 1999]) bar(x, 2, 430, 600);
label(448, 425, '1', 'label number');
label(898, 425, '2', 'label number');
label(1266, 425, '3', 'label number');
label(1672, 425, '4', 'label number');
add('ellipse', { cx: 483, cy: 401, rx: 7, ry: 4.5, transform: 'rotate(-20 483 401)' });
rect(489, 370, 2, 30, '#000');
label(496, 401, '= 180', 'label');
path('M175 522C190 535 201 558 201 582C201 612 186 634 172 655C158 674 142 690 142 712C142 738 160 754 184 755C206 756 218 740 218 720C218 704 206 694 190 693C174 693 165 702 165 714C165 724 170 732 176 736L172 740C160 734 153 724 153 710C153 690 168 677 188 677C210 677 223 694 223 717C223 743 206 761 182 761C152 761 129 738 129 705C129 676 146 654 164 632C182 610 194 592 194 566C194 552 188 544 182 546C170 552 159 572 159 592C159 608 164 628 170 648L191 740C196 764 198 778 196 790C192 812 180 822 166 822C148 822 135 808 135 794C135 782 142 775 150 775C160 775 165 782 165 790C165 800 158 806 150 807C155 816 160 817 166 817C180 817 188 806 190 790C191 778 190 762 187 744L164 650C156 622 151 602 151 580C151 556 160 534 175 522Z',
  '#000', { transform: 'translate(430 240) scale(.357 .333)' });
flat(568, 442, '#000');
flat(580, 418, '#000');
label(634, 460, '4', 'meter');
label(634, 494, '4', 'meter');
rest(692, 448);
rest(735, 448);
beats([
  [788, [[462, 'n']], 524, [[2, 0]], 'd'],
  [831, [[470]], 406, [[3, 2]]]
], 430, 600);
beats([
  [955, [[478], [534]], 414, [[3, 0], [6, 3]]],
  [997, [[502]], 422, [[4, 0]], 'b'], [1038, [[470]], 403, [[3, 2]]],
  [1079, [[462, 'n'], [534]], 394, [[2, 0], [6, 3]], 'b'], [1120, [[446]], 378, [[2, 3]]],
  [1161, [[502]], 390, [[4, 0]], 'b'], [1202, [[438, 'n']], 370, [[1, 0]]],
  [1322, [[534]], 398, [[6, 3]], 'b'], [1363, [[446]], 378, [[2, 3]]],
  [1404, [[502]], 430, [[4, 0]], 'b'], [1445, [[478]], 410, [[3, 0]]],
  [1486, [[534]], 366, [[6, 3]], 'b'], [1526, [[414]], 347, [[1, 5]]],
  [1567, [[422], [478]], 544, [[1, 3], [3, 0]], 'db'], [1608, [[438, 'n']], 524, [[1, 0]], 'd'],
  [1729, [[510]], 414, [[6, 8]], 'b'], [1770, [[462, 'n']], 394, [[2, 0]]],
  [1811, [[470]], 402, [[4, 7]], 'f'],
  [1852, [[478]], 414, [[3, 0]]],
  [1895, [[462]], 528, [[2, 0]], 'df'],
  [1936, [[470]], 406, [[4, 7]]]
], 430, 600);
slur(1085, 619);
slur(1532, 599);
add('rect', { x: 682, y: 586, width: 28, height: 28, rx: 4, fill: '#f2f2f2', stroke: '#000', 'stroke-width': 2 });
rect(684, 599, 24, 2, '#d9d9d9');
chord(934, 274, '1', [1, 2, 3], [], [[0, 3], [4, 2]]);
chord(1302, 274, '1', [1, 2, 3], [], [[0, 3], [4, 2]]);
chord(1466, 274, '1', [2], [3], [[0, 5], [1, 3], [4, 2]]);
chord(1708, 274, '1', [0, 1, 2], [], [[3, 2], [4, 3]]);

/* second system */
staff(948, 1116, 445, 2000);
rect(445, 948, 2, 268, '#000');
for (const x of [769, 1387, 1713, 1999]) bar(x, 2, 948, 1116);
bar(1013, 4, 948, 1116);
bar(1019, 8, 948, 1116);
repeatDots(1004, 948, 1116);
label(448, 943, '5', 'label number');
label(772, 943, '6', 'label number');
label(1001, 943, 'x1', 'label');
label(1028, 943, '7', 'label number');
label(1390, 943, '8', 'label number');
label(1716, 943, '9', 'label number');
path('M496 794V764H770M820 794V764H1026', 'none', { stroke: '#000', 'stroke-width': 2 });
label(506, 785, '1', 'label');
label(830, 785, '2', 'label');
beats([
  [504, [[1020]], 948, [[6, 10]], 'b'], [545, [[996]], 929, [[3, 0]]],
  [585, [[988]], 920, [[4, 7]], 'f'],
  [625, [[980, 'n']], 1042, [[2, 0]], 'd'],
  [667, [[996]], 928, [[3, 0]], 'f'],
  [707, [[988]], 924, [[4, 7]]],
  [828, [[1020]], 956, [[6, 10]], 'h'],
  [879, [[980, 'n']], 1042, [[2, 0]], 'd'],
  [921, [[988]], 924, [[3, 2]]],
  [1085, [[996], [1052]], 932, [[3, 0], [6, 3]]],
  [1127, [[1020]], 940, [[4, 0]], 'b'], [1167, [[988]], 921, [[3, 2]]],
  [1207, [[980, 'n'], [1052]], 912, [[2, 0], [6, 3]], 'b'], [1247, [[964]], 896, [[2, 3]]],
  [1287, [[1020]], 908, [[4, 0]], 'b'], [1327, [[956, 'n']], 888, [[1, 0]]],
  [1447, [[1052]], 916, [[6, 3]], 'b'], [1487, [[964]], 896, [[2, 3]]],
  [1527, [[1020]], 948, [[4, 0]], 'b'], [1567, [[996]], 929, [[3, 0]]],
  [1607, [[1052]], 988, [[6, 3]]],
  [1649, [[1052, 'b']], 988, [[6, 2]]],
  [1772, [[1068, 'n']], 1004, [[6, 0]]],
  [1814, [[996], [1012, 'n']], 932, [[3, 0], [4, 2]]],
  [1856, [[1036, 'n']], 972, [[5, 2]]],
  [1898, [[1012]], 940, [[4, 2]], 'b'], [1939, [[988]], 921, [[3, 2]]]
], 948, 1116);
slur(1212, 1135);
slur(1944, 1155);
chord(484, 816, '9', [], [], []);
chord(808, 816, '1', [3], [4], [[0, 2], [1, 3], [2, 2]]);
chord(1064, 816, '1', [1, 2, 3], [], [[0, 3], [4, 2]]);
chord(1426, 816, '1', [1, 2, 3], [], [[0, 3], [4, 2]]);
chord(1752, 816, '1', [0, 1, 2], [], [[3, 2], [4, 2]]);
```
